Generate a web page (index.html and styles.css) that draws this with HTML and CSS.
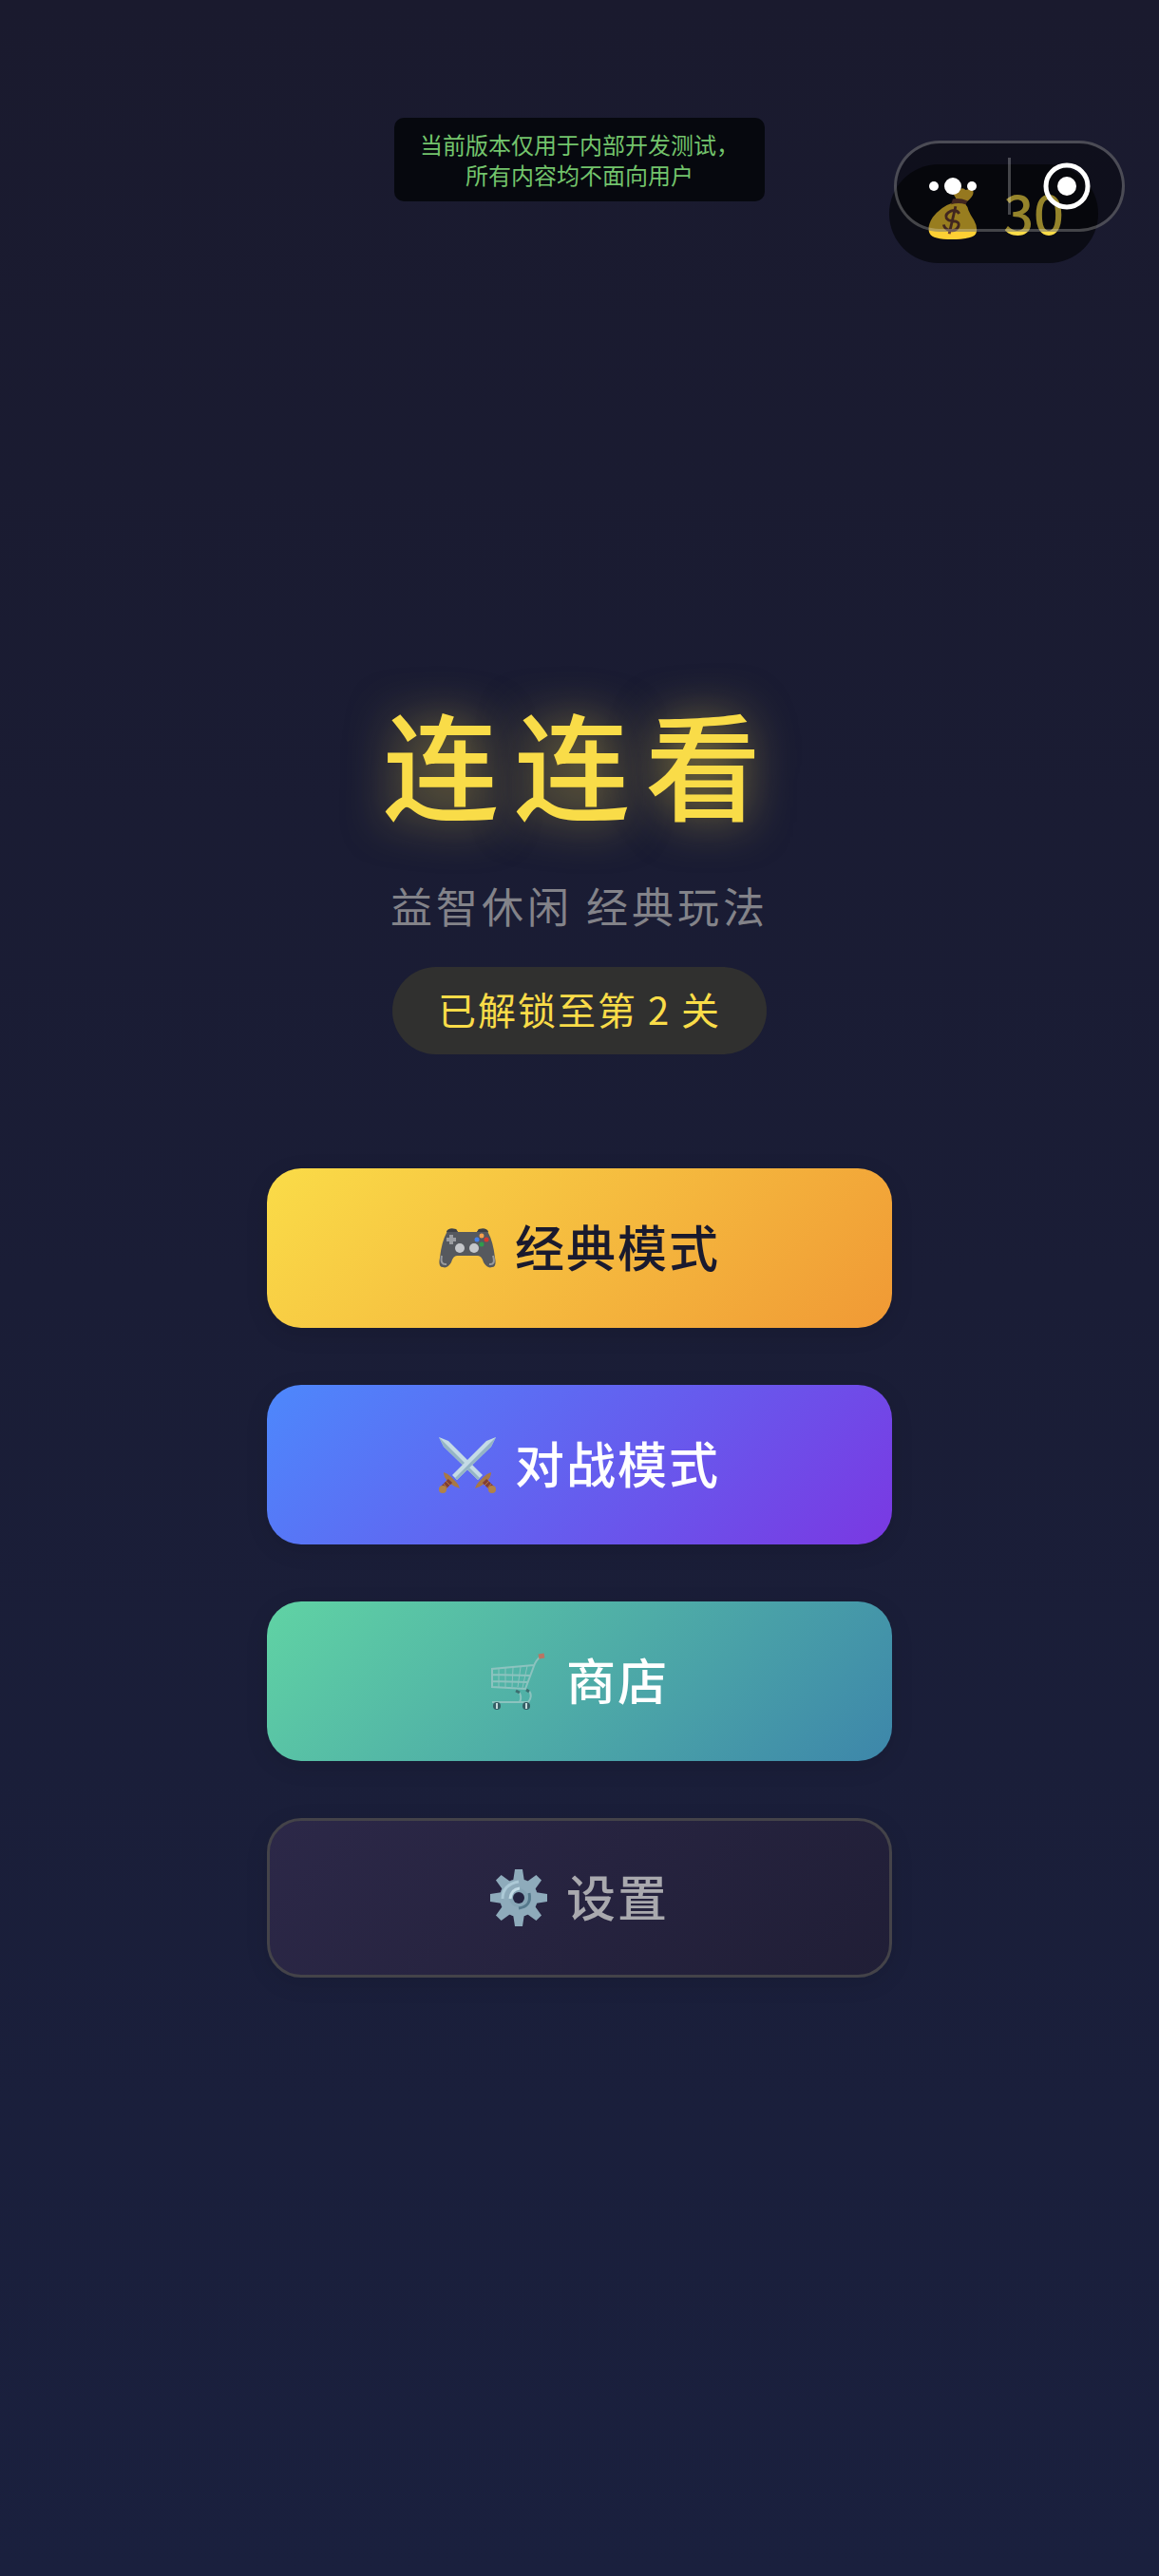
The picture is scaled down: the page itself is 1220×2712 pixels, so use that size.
FILE: index.html
```html
<!DOCTYPE html>
<html lang="zh-CN">
<head>
    <meta charset="UTF-8">
    <meta name="viewport" content="width=device-width, initial-scale=1.0">
    <title>连连看</title>
    <link rel="stylesheet" href="styles.css">
</head>
<body>
    <div class="dev-notice">当前版本仅用于内部开发测试，<br>所有内容均不面向用户</div>

    <div class="coins">
        <svg class="coin-icon" viewBox="0 0 56 56" aria-hidden="true">
            <path d="M33 14 L27 4 Q29 0 34 3 Q38 -2 42 2 Q47 0 50 3 Q52 8 43 15 Z" fill="#fbc935"/>
            <path d="M28 16 Q15 20 6 32 Q-1 43 3 50 Q6 56 27 56 Q49 56 53 50 Q56 44 51 35 Q47 29 45 24 Q44 19 40 16 Z" fill="#fdd034"/>
            <path d="M28 12 Q35 10 44 14 L42 18 Q34 15 26 18 Z" fill="#6d4034"/>
            <path d="M35 28 Q32 23 26 25 Q19 28 21 33 Q23 36 28 36 Q36 36 34 42 Q31 48 24 46 Q19 45 18 40 M31 20 L24 50" fill="none" stroke="#6d4034" stroke-width="3"/>
        </svg>
        <span class="label">30</span>
    </div>

    <div class="capsule">
        <button class="capsule-btn" aria-label="更多">
            <svg width="52" height="20" viewBox="0 0 52 20">
                <circle cx="6" cy="10" r="5" fill="#fff"/>
                <circle cx="26" cy="10" r="9" fill="#fff"/>
                <circle cx="46" cy="10" r="5" fill="#fff"/>
            </svg>
        </button>
        <span class="capsule-line"></span>
        <button class="capsule-btn" aria-label="关闭">
            <svg width="50" height="50" viewBox="0 0 50 50">
                <circle cx="25" cy="25" r="22" fill="none" stroke="#fff" stroke-width="5"/>
                <circle cx="25" cy="25" r="10" fill="#fff"/>
            </svg>
        </button>
    </div>

    <main class="home">
        <h1 class="title">连连看</h1>
        <p class="subtitle">益智休闲 经典玩法</p>
        <div class="level">已解锁至第 2 关</div>

        <nav class="menu">
            <button class="menu-btn classic">
                <svg class="icon" viewBox="0 -2 60 60" aria-hidden="true">
                    <path d="M8 12 Q9 6 18 8 L20 11 L40 11 L42 8 Q51 6 52 12 Q57 21 59 38 Q61 48 56 48 Q51 50 47 43 Q45 36 41 36 L19 36 Q15 36 13 43 Q9 50 4 48 Q-1 48 1 38 Q3 21 8 12 Z" fill="#56595e"/>
                    <path d="M8 11 Q9 6 18 8 L20 11 L14 11 Z M52 11 Q51 6 42 8 L40 11 L46 11 Z" fill="#3e4146"/>
                    <path d="M13 14 V24 M8 19 H18" stroke="#9b9da0" stroke-width="4"/>
                    <circle cx="22" cy="28" r="5" fill="#c5c7ca"/>
                    <circle cx="37" cy="28" r="5" fill="#c5c7ca"/>
                    <circle cx="45" cy="15" r="2.5" fill="#f6a04d"/>
                    <circle cx="40" cy="19" r="2.5" fill="#427fe8"/>
                    <circle cx="50" cy="19" r="2.5" fill="#d8372e"/>
                    <circle cx="45" cy="24" r="2.5" fill="#2f9b4c"/>
                    <path d="M3 36 Q1 46 8 45 M57 36 Q60 46 53 45" fill="none" stroke="#999b9e" stroke-width="2"/>
                </svg>
                <span class="label">经典模式</span>
            </button>
            <button class="menu-btn battle">
                <svg class="icon" viewBox="0 0 60 60" aria-hidden="true">
                    <path d="M0 1 L10 5 L46 41 L41 46 L5 11 Z" fill="#c4dbe5"/>
                    <path d="M0 1 L43 44 L41 46 L5 11 Z" fill="#94b4c5"/>
                    <path d="M60 1 L50 5 L14 41 L19 46 L55 11 Z" fill="#c4dbe5"/>
                    <path d="M60 1 L17 44 L19 46 L55 11 Z" fill="#94b4c5"/>
                    <path d="M5 38 Q9 39 13 43 L18 48 Q21 51 22 55 Q16 53 12 50 L9 47 Q5 43 5 38 Z M55 38 Q51 39 47 43 L42 48 Q39 51 38 55 Q44 53 48 50 L51 47 Q55 43 55 38 Z" fill="#a87845"/>
                    <path d="M12 47 L4 55 M48 47 L56 55" stroke="#813f36" stroke-width="6"/>
                    <path d="M7 47 L12 52 M5 50 L9 55 M53 47 L48 52 M55 50 L51 55" stroke="#b27a45" stroke-width="1"/>
                    <circle cx="4" cy="56" r="4" fill="#b18248"/>
                    <circle cx="56" cy="56" r="4" fill="#b18248"/>
                </svg>
                <span class="label">对战模式</span>
            </button>
            <button class="menu-btn shop">
                <svg class="icon" viewBox="0 0 60 60" aria-hidden="true">
                    <g fill="none" stroke="#8cc3bf" stroke-width="2">
                        <path d="M53 4 Q48 8 46 14 L37 38 L2 36 V17 L46 13 M2 23 L42 24 M2 30 L40 31"/>
                        <path d="M9 17 V36 M16 16 V36 M24 16 L23 36 M32 15 L29 36 M39 14 L34 37" stroke-width="1"/>
                        <path d="M41 40 Q45 46 40 52 L2 52 M30 41 Q34 46 31 52"/>
                    </g>
                    <path d="M51 4 L57 3" stroke="#b97664" stroke-width="5"/>
                    <path d="M27 40 L31 42 M38 39 L41 41" stroke="#3c6f70" stroke-width="3"/>
                    <circle cx="7" cy="56" r="4" fill="#365d65"/>
                    <circle cx="38" cy="56" r="4" fill="#365d65"/>
                    <path d="M7 53 V59 M38 53 V59" stroke="#c6dbdc" stroke-width="2"/>
                </svg>
                <span class="label">商店</span>
            </button>
            <button class="menu-btn settings">
                <svg class="icon" viewBox="0 0 60 60" aria-hidden="true">
                    <g fill="#8eabbb">
                        <circle cx="30" cy="30" r="20"/>
                        <path id="teeth" d="M26 0 H34 L36 13 H24 Z M26 60 H34 L36 47 H24 Z M0 26 V34 L13 36 V24 Z M60 26 V34 L47 36 V24 Z"/>
                        <use href="#teeth" transform="rotate(45 30 30)"/>
                    </g>
                    <path d="M13 31 Q13 16 30 13" fill="none" stroke="#acc9d6" stroke-width="3"/>
                    <circle cx="30" cy="30" r="10" fill="#86a5b5"/>
                    <path d="M21 31 Q22 21 31 20" fill="none" stroke="#c3dce6" stroke-width="3"/>
                    <path d="M41 25 Q44 39 30 41" fill="none" stroke="#55798c" stroke-width="3"/>
                    <circle cx="30" cy="30" r="6" fill="#232340"/>
                </svg>
                <span class="label">设置</span>
            </button>
        </nav>
    </main>
</body>
</html>
```

FILE: styles.css
```css
* {
    box-sizing: border-box;
}
body {
    margin: 0;
    min-height: 100vh;
    font-family: "Noto Sans CJK SC", sans-serif;
    background: linear-gradient(180deg, #1a1a2e, #1a203e);
    color: #fff;
}
button {
    border: none;
    font-family: inherit;
    cursor: pointer;
}
.dev-notice {
    position: absolute;
    top: 124px;
    left: 50%;
    transform: translateX(-50%);
    padding: 12px 27px;
    border-radius: 10px;
    background: #06080e;
    color: #73c46c;
    font-size: 24px;
    line-height: 32px;
    text-align: center;
    white-space: nowrap;
}
.coins {
    position: absolute;
    top: 173px;
    right: 64px;
    display: flex;
    align-items: center;
    gap: 26px;
    height: 104px;
    padding: 0 36px 0 40px;
    border-radius: 52px;
    background: #0b0c15;
    color: #f9dc48;
    font-size: 56px;
    font-weight: 500;
}
.coin-icon {
    width: 54px;
    height: 56px;
}
.label {
    padding-bottom: 6px;
}
/* sits over the coin counter */
.capsule {
    position: absolute;
    top: 148px;
    right: 36px;
    display: flex;
    align-items: center;
    width: 243px;
    height: 96px;
    border: 3px solid rgba(255, 255, 255, 0.25);
    border-radius: 48px;
    background: rgba(0, 0, 0, 0.4);
}
.capsule-btn {
    flex: 1;
    display: flex;
    justify-content: center;
    padding: 0;
    background: none;
}
.capsule-line {
    width: 3px;
    height: 60px;
    background: rgba(255, 255, 255, 0.25);
}
.home {
    display: flex;
    flex-direction: column;
    align-items: center;
    padding: 713px 0 120px;
}
.title {
    margin: 0;
    color: #f9dc48;
    font-size: 122px;
    font-weight: 500;
    line-height: 176px;
    letter-spacing: 16px;
    text-shadow: 0 0 48px rgba(249, 220, 72, 0.5);
}
.subtitle {
    margin: 32px 0 0;
    color: #838389;
    font-size: 44px;
    line-height: 64px;
    letter-spacing: 4px;
}
.level {
    margin-top: 33px;
    padding: 0 48px 4px;
    border-radius: 46px;
    background: #30302f;
    color: #f9dc48;
    font-size: 40px;
    line-height: 88px;
    letter-spacing: 2px;
}
.menu {
    display: flex;
    flex-direction: column;
    gap: 60px;
    width: 54%;
    margin-top: 120px;
}
.menu-btn {
    display: flex;
    align-items: center;
    justify-content: center;
    gap: 20px;
    height: 168px;
    border-radius: 36px;
    box-shadow: 0 6px 24px rgba(0, 0, 0, 0.1);
    color: #fff;
    font-size: 52px;
    font-weight: 500;
    letter-spacing: 2px;
}
.icon {
    width: 60px;
    height: 60px;
}
.classic {
    background: linear-gradient(135deg, #fadc48, #f09935);
    color: #1a1a2e;
}
.battle {
    background: linear-gradient(135deg, #4d88fc, #7a38e2);
}
.shop {
    background: linear-gradient(135deg, #60d3a4, #3d86aa);
}
.settings {
    border: 3px solid #444349;
    background: linear-gradient(135deg, #2c2848, #201e36);
    color: #a9a9ae;
}
```
